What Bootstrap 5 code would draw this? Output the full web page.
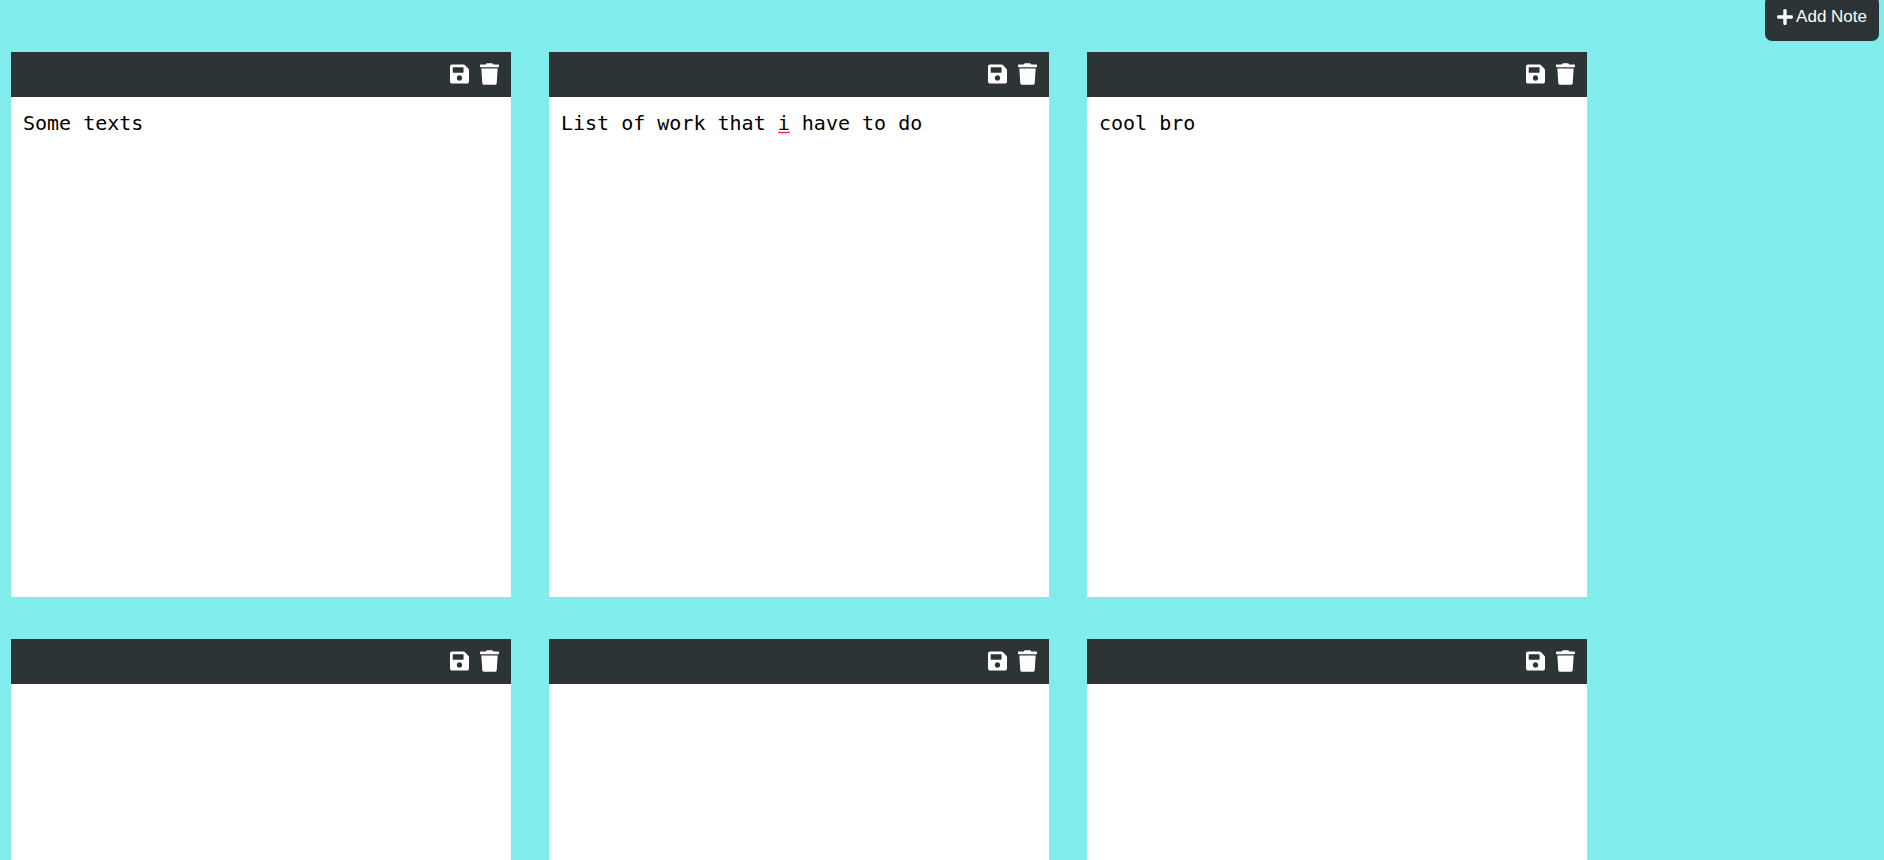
<!DOCTYPE html>
<html lang="en">
<head>
<meta charset="utf-8">
<meta name="viewport" content="width=device-width, initial-scale=1">
<title>Notes</title>
<link href="https://cdn.jsdelivr.net/npm/bootstrap@5.3.0/dist/css/bootstrap.min.css" rel="stylesheet">
<style>
  body { background: #81ecec; font-family: "Liberation Sans", Arial, sans-serif; }
  .topbar { height: 52px; padding-right: 5px; }
  .add-btn {
    --bs-btn-color: #fff; --bs-btn-bg: #2d3436; --bs-btn-hover-color: #fff; --bs-btn-hover-bg: #3d4648;
    height: 45px; margin-top: -4px; padding: 0 12px 3px; gap: 3px;
    border: 0; border-radius: 7px; font-size: 17px; line-height: 20px;
  }
  .board { gap: 42px 38px; padding: 0 11px 42px; }
  .note { width: 500px; max-width: 100%; }
  .note-tools { height: 45px; gap: 11px; padding: 0 12px 2px; background: #2d3436; }
  .note-tools .btn { color: #fff; line-height: 0; }
  .note-body { font: 20px/28px "DejaVu Sans Mono", monospace; }
  .note-body textarea {
    height: 500px; padding: 12px; border: 0; outline: 0; resize: none; background: #fff; color: #000;
  }
  .squiggle { left: calc(12px + 18ch); top: 34px; width: 1ch; height: 3px; }
</style>
</head>
<body>
<header class="topbar d-flex justify-content-end align-items-start">
  <button type="button" class="btn add-btn d-flex align-items-center" id="add">
    <svg width="16" height="18" viewBox="0 0 448 512" fill="currentColor" aria-hidden="true"><path d="M416 208H272V64c0-17.67-14.33-32-32-32h-32c-17.67 0-32 14.33-32 32v144H32c-17.67 0-32 14.33-32 32v32c0 17.67 14.33 32 32 32h144v144c0 17.67 14.33 32 32 32h32c17.67 0 32-14.33 32-32V304h144c17.67 0 32-14.33 32-32v-32c0-17.67-14.33-32-32-32z"/></svg>
    <span>Add Note</span>
  </button>
</header>

<main class="board d-flex flex-wrap" id="board"></main>

<template id="note-template">
  <article class="note">
    <div class="note-tools d-flex justify-content-end align-items-center">
      <button type="button" class="btn p-0 border-0 save" aria-label="Save note">
        <svg width="19" height="22" viewBox="0 0 448 512" fill="currentColor" aria-hidden="true"><path d="M433.941 129.941l-83.882-83.882A48 48 0 0 0 316.118 32H48C21.49 32 0 53.49 0 80v352c0 26.51 21.49 48 48 48h352c26.51 0 48-21.49 48-48V163.882a48 48 0 0 0-14.059-33.941zM224 416c-35.346 0-64-28.654-64-64 0-35.346 28.654-64 64-64s64 28.654 64 64c0 35.346-28.654 64-64 64zm96-304.52V212c0 6.627-5.373 12-12 12H76c-6.627 0-12-5.373-12-12V108c0-6.627 5.373-12 12-12h228.52c3.183 0 6.235 1.264 8.485 3.515l3.48 3.48A11.996 11.996 0 0 1 320 111.48z"/></svg>
      </button>
      <button type="button" class="btn p-0 border-0 trash" aria-label="Delete note">
        <svg width="19" height="22" viewBox="0 0 448 512" fill="currentColor" aria-hidden="true"><path d="M432 32H312l-9.4-18.7A24 24 0 0 0 281.1 0H166.8a23.72 23.72 0 0 0-21.4 13.3L136 32H16A16 16 0 0 0 0 48v32a16 16 0 0 0 16 16h416a16 16 0 0 0 16-16V48a16 16 0 0 0-16-16zM53.2 467a48 48 0 0 0 47.9 45h245.8a48 48 0 0 0 47.9-45L416 128H32z"/></svg>
      </button>
    </div>
    <div class="note-body position-relative">
      <textarea class="d-block w-100 rounded-0" aria-label="Note text" spellcheck="false"></textarea>
    </div>
  </article>
</template>

<script src="https://cdn.jsdelivr.net/npm/bootstrap@5.3.0/dist/js/bootstrap.bundle.min.js"></script>
<script>
  const board = document.getElementById('board');
  const template = document.getElementById('note-template');

  function addNote(text = '') {
    const note = template.content.firstElementChild.cloneNode(true);
    note.querySelector('textarea').value = text;
    note.querySelector('.trash').addEventListener('click', () => note.remove());
    board.append(note);
    return note;
  }

  const notes = ['Some texts', 'List of work that i have to do', 'cool bro', '', '', ''].map(text => addNote(text));

  // Spelling mark under the lone "i" of the second note, gone once the note is edited
  const body = notes[1].querySelector('.note-body');
  body.insertAdjacentHTML('beforeend',
    '<svg class="squiggle position-absolute pe-none" viewBox="0 0 12 3" preserveAspectRatio="none" aria-hidden="true">' +
    '<path d="M0 2L2 1L4 2L6 1L8 2L10 1L12 2" fill="none" stroke="#f00" stroke-width="1"/></svg>');
  body.querySelector('textarea').addEventListener('input', () => body.querySelector('.squiggle')?.remove());

  document.getElementById('add').addEventListener('click', () => addNote());
</script>
</body>
</html>
